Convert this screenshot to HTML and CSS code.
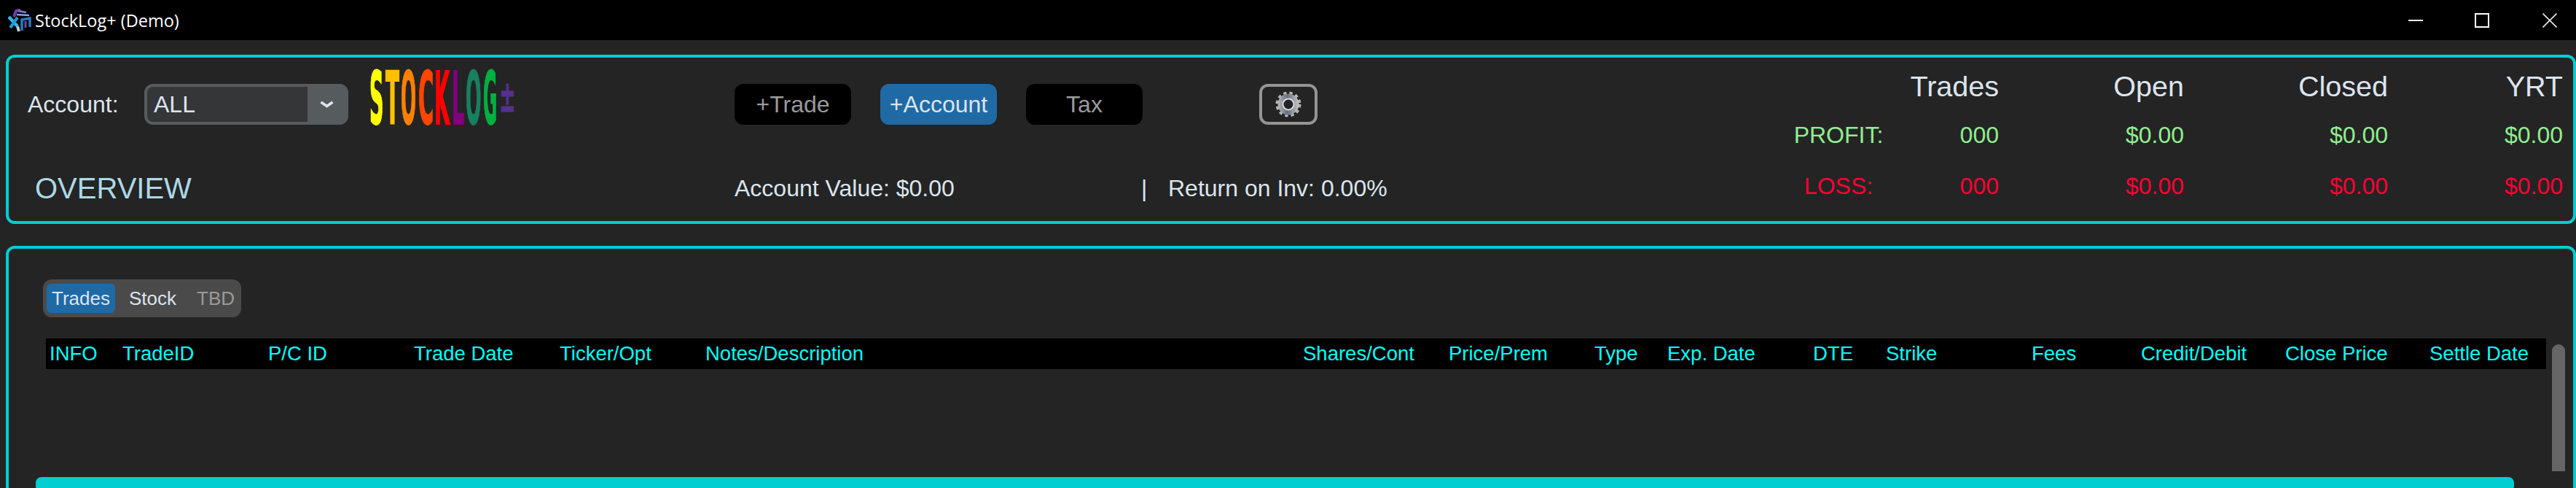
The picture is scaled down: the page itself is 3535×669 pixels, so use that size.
FILE: index.html
```html
<!DOCTYPE html>
<html lang="en">
<head>
<meta charset="utf-8">
<title>StockLog+ (Demo)</title>
<link rel="stylesheet" href="styles.css">
</head>
<body>
<header class="titlebar">
  <div class="title-left">
    <svg class="app-icon" width="32" height="32" viewBox="0 0 32 32" fill="none">
      <path d="M8 11 L11 3 L17 1" stroke="#6a3fa8" stroke-width="4"/>
      <path d="M14 3 L25 5" stroke="#8f7ad0" stroke-width="2.5"/>
      <path d="M12 8 L29 9" stroke="#7fa8e0" stroke-width="2.5"/>
      <path d="M1 11 L13 24" stroke="#2fb8ec" stroke-width="4.5"/>
      <path d="M13 12 L3 26" stroke="#1f9ad8" stroke-width="4"/>
      <path d="M13 24 L15 31" stroke="#c9c9d2" stroke-width="4"/>
      <path d="M19 30 L19 15 L30 13 L30 25" stroke="#2f78c0" stroke-width="3.5"/>
      <path d="M24 26 L24 17" stroke="#6a4ca8" stroke-width="3"/>
    </svg>
    <span class="app-title">StockLog+ (Demo)</span>
  </div>
  <div class="win-controls">
    <svg class="win-min" width="20" height="20" viewBox="0 0 20 20"><rect x="0" y="9" width="20" height="2" fill="#fff"/></svg>
    <svg class="win-max" width="20" height="20" viewBox="0 0 20 20"><rect x="1" y="1" width="18" height="18" fill="none" stroke="#fff" stroke-width="2"/></svg>
    <svg width="20" height="20" viewBox="0 0 20 20"><path d="M0.5 0.5 L19.5 19.5 M19.5 0.5 L0.5 19.5" stroke="#e8e8e8" stroke-width="1.6" fill="none"/></svg>
  </div>
</header>

<section class="panel panel-top">
  <div class="top-main">
    <div class="top-row">
      <span class="account-label">Account:</span>
      <div class="select">
        <span class="select-value">ALL</span>
        <span class="select-btn">
          <svg width="19" height="10" viewBox="0 0 19 10"><path d="M1.5 2 L9.5 7.5 L17.5 2" fill="none" stroke="#dce4ee" stroke-width="3.6"/></svg>
        </span>
      </div>
      <div class="logo">
        <span class="lg lg-s"><span class="ch ch-s">S</span></span>
        <span class="lg lg-t"><span class="ch ch-t">T</span></span>
        <span class="lg lg-o1"><span class="ch ch-o1">O</span></span>
        <span class="lg lg-c"><span class="ch ch-c">C</span></span>
        <span class="lg lg-k"><span class="ch ch-k">K</span></span>
        <span class="lg lg-l"><span class="ch ch-l">L</span></span>
        <span class="lg lg-o2"><span class="ch ch-o2">O</span></span>
        <span class="lg lg-g"><span class="ch ch-g">G</span></span>
        <span class="lg lg-pm"><span class="ch ch-pm">±</span></span>
      </div>
      <div class="actions">
        <button class="btn">+Trade</button>
        <button class="btn btn-primary">+Account</button>
        <button class="btn">Tax</button>
        <button class="btn-gear" aria-label="Settings">
          <svg width="40" height="40" viewBox="0 0 40 40">
            <defs>
              <linearGradient id="gearFill" x1="0" y1="0" x2="1" y2="0">
                <stop offset="0" stop-color="#b8babc"/>
                <stop offset="0.45" stop-color="#66717d"/>
                <stop offset="1" stop-color="#c4c6c8"/>
              </linearGradient>
            </defs>
            <circle cx="20" cy="20" r="15.5" fill="none" stroke="#b4b6b8" stroke-width="4" stroke-dasharray="4.2 4.03"/>
            <circle cx="20" cy="20" r="14.5" fill="url(#gearFill)"/>
            <circle cx="20" cy="20" r="7.5" fill="#242424" stroke="#d8dadc" stroke-width="2"/>
          </svg>
        </button>
      </div>
    </div>
    <div class="bottom-row">
      <h1 class="overview">OVERVIEW</h1>
      <span class="acct-value">Account Value: $0.00</span>
      <span class="divider">|</span>
      <span class="roi">Return on Inv: 0.00%</span>
    </div>
  </div>
  <div class="stats">
    <span></span><span class="stat-head">Trades</span><span class="stat-head">Open</span><span class="stat-head">Closed</span><span class="stat-head">YRT</span>
    <span class="stat-label profit">PROFIT:</span><span class="stat profit">000</span><span class="stat profit">$0.00</span><span class="stat profit">$0.00</span><span class="stat profit">$0.00</span>
    <span class="stat-label loss">LOSS:</span><span class="stat loss">000</span><span class="stat loss">$0.00</span><span class="stat loss">$0.00</span><span class="stat loss">$0.00</span>
  </div>
</section>

<section class="panel panel-bottom">
  <div class="segmented">
    <span class="seg seg-active">Trades</span>
    <span class="seg seg-stock">Stock</span>
    <span class="seg seg-disabled">TBD</span>
  </div>
  <div class="table-wrap">
    <div class="table-head">
      <span>INFO</span><span>TradeID</span><span>P/C ID</span><span>Trade Date</span><span>Ticker/Opt</span><span>Notes/Description</span><span>Shares/Cont</span><span>Price/Prem</span><span>Type</span><span>Exp. Date</span><span>DTE</span><span>Strike</span><span>Fees</span><span>Credit/Debit</span><span>Close Price</span><span>Settle Date</span>
    </div>
    <div class="vscroll"></div>
  </div>
  <div class="hscroll"></div>
</section>
</body>
</html>
```
FILE: styles.css
```css
* { box-sizing: border-box; }
html, body { margin: 0; height: 669px; overflow: hidden; }
body {
  background: #242424;
  color: #dce4ee;
  font-family: "Liberation Sans", Arial, sans-serif;
}
.titlebar {
  height: 55px;
  background: #000;
  display: flex;
  justify-content: space-between;
  align-items: center;
  padding: 0 26px 0 11px;
}
.title-left { display: flex; align-items: center; gap: 5px; }
.app-icon { display: block; }
.app-title {
  font-family: "Open Sans", sans-serif;
  font-size: 23.5px;
  color: #fff;
}
.win-controls { display: flex; gap: 73px; }
.win-controls svg { display: block; }
.win-min { margin-right: -2px; }

.panel {
  margin-left: 8px;
  border: 4px solid #00ced1;
  border-radius: 12px;
}
.panel-top {
  margin-top: 20px;
  height: 232px;
  display: flex;
  justify-content: space-between;
}
.top-main { display: flex; flex-direction: column; }
.top-row {
  display: flex;
  align-items: flex-start;
  padding: 36px 0 0 26px;
  height: 92px;
  font-size: 32px;
}
.account-label { width: 160px; line-height: 56px; }
.select {
  width: 280px;
  height: 56px;
  border: 4px solid #565b5e;
  border-radius: 12px;
  background: #565b5e;
  display: flex;
  overflow: hidden;
}
.select-value {
  width: 220px;
  background: #343638;
  padding-left: 9px;
  font-size: 32px;
  line-height: 48px;
}
.select-btn { flex: 1; display: flex; align-items: center; justify-content: center; }
.select-btn svg { display: block; }

.logo {
  display: flex;
  width: 200px;
  height: 78px;
  margin: -18px 0 0 29px;
  font-family: "DejaVu Sans", sans-serif;
  font-stretch: condensed;
  font-weight: 700;
  font-size: 100px;
  line-height: 78px;
}
.lg { display: block; height: 78px; flex: none; }
.ch {
  display: inline-block;
  transform-origin: 0 50%;
  -webkit-text-stroke: 2px currentColor;
}
.lg-s { width: 22px; }
.lg-t { width: 21px; }
.lg-o1 { width: 24px; }
.lg-c { width: 22px; }
.lg-k { width: 24px; }
.lg-l { width: 19px; }
.lg-o2 { width: 24px; }
.lg-g { width: 22px; }
.lg-pm { width: 22px; }
.ch-s { color: #ffff00; transform: scaleX(0.30); }
.ch-t { color: #ffc000; transform: scaleX(0.31); }
.ch-o1 { color: #ff8000; transform: scaleX(0.275); }
.ch-c { color: #ff4500; transform: scaleX(0.32); }
.ch-k { color: #ff0000; transform: scaleX(0.30); }
.ch-l { color: #800080; transform: scaleX(0.30); }
.ch-o2 { color: #178060; transform: scaleX(0.28); }
.ch-g { color: #00b040; transform: scaleX(0.26); }
.ch-pm {
  color: #553090;
  font-size: 60px;
  line-height: 60px;
  -webkit-text-stroke: 1px currentColor;
  transform: translateY(-17px) scaleX(0.5);
}

.actions { display: flex; margin-left: 301px; gap: 40px; }
.btn {
  width: 160px;
  height: 56px;
  border: 0;
  padding: 0;
  border-radius: 12px;
  background: #000;
  color: #9a9a9a;
  font: inherit;
}
.btn-primary { background: #1f6aa5; color: #dce4ee; }
.btn-gear {
  width: 80px;
  height: 56px;
  margin-left: 120px;
  padding: 0;
  border: 4px solid #949494;
  border-radius: 12px;
  background: transparent;
  display: flex;
  align-items: center;
  justify-content: center;
}
.btn-gear svg { display: block; }

.bottom-row {
  display: flex;
  align-items: flex-start;
  font-size: 32px;
  padding-top: 67px;
  line-height: 40px;
}
.overview {
  margin: 0 0 0 36px;
  width: 960px;
  font-size: 40px;
  font-weight: 400;
  color: #add8e6;
  line-height: 40px;
}
.acct-value { width: 558px; }
.divider { width: 37px; }

.stats {
  display: grid;
  grid-template-columns: 160px 140px 254px 280px 240px;
  grid-template-rows: 61px 63px 70px;
  align-items: end;
  padding-right: 14px;
  text-align: right;
  font-size: 32px;
  line-height: 36px;
}
.stat-head { font-size: 39.5px; line-height: 44px; }
.stat-label { text-align: center; }
.profit { color: #90ee90; }
.loss { color: #ff0033; }

.panel-bottom {
  margin-top: 30px;
  height: 400px;
  position: relative;
  padding: 42px 0 0 47px;
}
.segmented {
  width: 272px;
  height: 52px;
  padding: 6px 5px;
  border-radius: 12px;
  background: #4a4a4a;
  display: flex;
  font-size: 26px;
  line-height: 40px;
}
.seg { padding: 0 7px; margin-right: 12px; }
.seg-active { background: #1f6aa5; border-radius: 6px; width: 95px; }
.seg-stock { margin-right: 14px; }
.seg-disabled { color: #9a9a9a; }

.table-wrap {
  display: flex;
  align-items: flex-start;
  margin: 29px 0 0 4px;
}
.table-head {
  width: 3431px;
  height: 42px;
  background: #000;
  color: #00ffff;
  font-size: 27.5px;
  line-height: 42px;
  display: grid;
  grid-template-columns: 100px 200px 200px 200px 200px 820px 200px 200px 100px 200px 100px 200px 150px 198px 198px 1fr;
  padding-left: 5px;
  white-space: nowrap;
}
.vscroll {
  width: 18px;
  height: 174px;
  margin: 8px 0 0 8px;
  background: #666;
  border-radius: 9px 9px 0 0;
}
.hscroll {
  position: absolute;
  left: 37px;
  top: 313px;
  width: 3401px;
  height: 20px;
  background: #00ced1;
  border-radius: 8px;
}
```
